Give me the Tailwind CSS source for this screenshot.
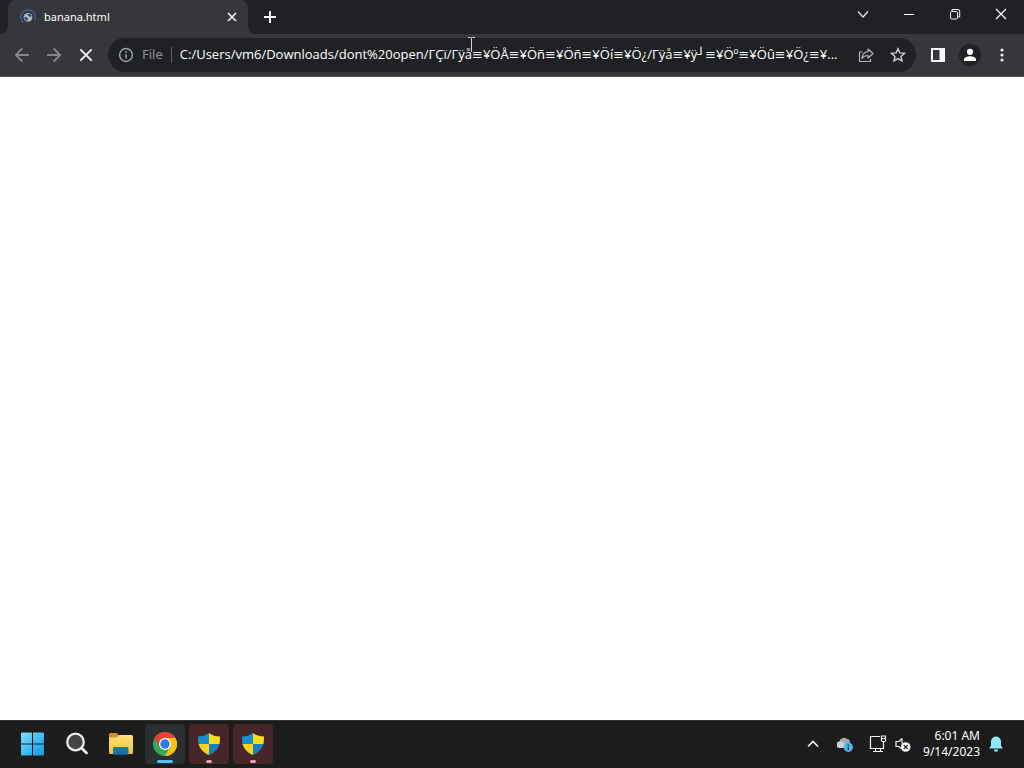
<!DOCTYPE html>
<html lang="en">
<head>
<meta charset="utf-8">
<title>banana.html</title>
<script src="https://cdn.jsdelivr.net/npm/@tailwindcss/browser@4"></script>
</head>
<body class="flex h-screen flex-col overflow-hidden bg-white font-['Noto_Sans','Open_Sans',sans-serif] text-white">
<header class="relative shrink-0">
  <div class="flex h-[34px] bg-[#202124]">
    <div class="relative ml-2 flex w-60 items-center rounded-t-lg bg-[#36373a] pr-2 pl-3">
      <svg class="absolute bottom-0 -left-2 size-2" viewBox="0 0 8 8" aria-hidden="true"><path d="M8 0v8H0a8 8 0 0 0 8-8z" fill="#36373a"/></svg>
      <svg class="absolute -right-2 bottom-0 size-2" viewBox="0 0 8 8" aria-hidden="true"><path d="M0 0v8h8a8 8 0 0 1-8-8z" fill="#36373a"/></svg>
      <svg class="size-4 shrink-0" viewBox="0 0 16 16" fill="none" aria-hidden="true"><path d="M3.500 13.700A7.200 7.200 0 1 1 14.600 11" stroke="#42598a" stroke-width="1.600"/><circle cx="8" cy="8.300" r="4.400" fill="#a6b4c4"/><path d="M4.400 8.200c1.600-.4 2.400.3 3.200 1.200.5.7-.1 1.600-.6 2.400-1.500-.5-2.500-1.800-2.600-3.600zM7.500 5.200c1.700-.6 3.200.2 4 1.700-.8 1.300-1.900 1-2.500.2-.5-.6-1.500-.8-1.500-1.900z" fill="#33415a"/></svg>
      <span class="ml-2 flex-1 text-[11px] leading-4">banana.html</span>
      <button class="flex size-4 items-center justify-center" aria-label="Close tab"><svg class="size-4" viewBox="0 0 16 16" stroke="#f1f3f4" stroke-width="1.700"><path d="M4 4l8 8M12 4l-8 8"/></svg></button>
    </div>
    <button class="ml-2 flex w-7 items-center justify-center" aria-label="New tab"><svg class="size-4" viewBox="0 0 16 16" stroke="#f8f9fa" stroke-width="2"><path d="M8 2v12M2 8h12"/></svg></button>
    <div class="ml-auto flex h-7">
      <button class="flex w-[46px] items-center justify-center" aria-label="Search tabs"><svg class="size-4" viewBox="0 0 16 16" fill="none" stroke="#e8eaed" stroke-width="1.200"><path d="M3 5.500l5 5.500 5-5.500"/></svg></button>
      <button class="flex w-[46px] items-center justify-center" aria-label="Minimize"><svg class="size-4" viewBox="0 0 16 16" stroke="#fff"><path d="M3 8.500h10"/></svg></button>
      <button class="flex w-[46px] items-center justify-center" aria-label="Restore"><svg class="size-4" viewBox="0 0 16 16" fill="none" stroke="#f1f3f4"><rect x="3.500" y="5.500" width="7" height="7.500" rx="1.200"/><path d="M5 5V3.500h6a1.700 1.700 0 0 1 1.700 1.700V11H11"/></svg></button>
      <button class="flex w-[46px] items-center justify-center" aria-label="Close"><svg class="size-4" viewBox="0 0 16 16" stroke="#fff" stroke-width="1.200"><path d="M3 3l10 10M13 3L3 13"/></svg></button>
    </div>
  </div>
  <div class="flex h-[43px] items-center border-b border-[#505154] bg-[#36373a] px-1.5">
    <button class="flex w-8 justify-center" aria-label="Back"><svg class="size-4" viewBox="0 0 16 16" fill="none" stroke="#85878a" stroke-width="1.800"><path d="M15 8H2M8.300 1.500L1.800 8l6.500 6.500"/></svg></button>
    <button class="flex w-8 justify-center" aria-label="Forward"><svg class="size-4" viewBox="0 0 16 16" fill="none" stroke="#85878a" stroke-width="1.800"><path d="M1 8h13M7.700 1.500L14.200 8l-6.500 6.500"/></svg></button>
    <button class="flex w-8 justify-center" aria-label="Stop loading"><svg class="size-4" viewBox="0 0 16 16" stroke="#f1f3f4" stroke-width="1.900"><path d="M2.300 2.300l11.400 11.400M13.700 2.300L2.300 13.700"/></svg></button>
    <div class="mx-1.5 flex h-[34px] min-w-0 flex-1 items-center rounded-full bg-[#202124] pr-0.5 pl-2.5 text-[13px]">
      <svg class="size-4 shrink-0" viewBox="0 0 16 16" fill="none" stroke="#9aa0a6" stroke-width="1.500" aria-hidden="true"><circle cx="8" cy="8" r="6.400"/><path d="M8 7.200v4.300M8 4.300v1.600"/></svg>
      <label for="url" class="ml-2 text-[#8e9195]">File</label>
      <span class="mx-2 h-4 w-px bg-[#626468]"></span>
      <input id="url" class="min-w-0 flex-1 bg-transparent font-['Open_Sans','Inter','DejaVu_Sans',sans-serif] text-white outline-none" value="C:/Users/vm6/Downloads/dont%20open/ΓÇï/Γÿå≡¥ÖÅ≡¥Öñ≡¥Öñ≡¥Öí≡¥Ö¿/Γÿå≡¥ÿ┘≡¥Öº≡¥Öû≡¥Ö¿≡¥...">
      <button class="flex w-8 shrink-0 justify-center" aria-label="Share this page"><svg class="size-4" viewBox="0 0 16 16" fill="none" stroke="#b4b6b9" stroke-width="1.200" stroke-linejoin="round"><path d="M4.500 5H1.500v9.500h11V12M10 2l5 4.500-5 4.500V8.500c-3 0-4.500.8-6 3 .3-3.700 2.300-6.500 6-7z"/></svg></button>
      <button class="flex w-8 shrink-0 justify-center" aria-label="Bookmark this tab"><svg class="size-4" viewBox="0 0 16 16" fill="none" stroke="#d0d2d5" stroke-width="1.400"><path d="M8 1.800l1.850 4.150 4.550.45-3.400 3.050 1 4.450L8 11.600l-4 2.300 1-4.450L1.600 6.400l4.550-.45z"/></svg></button>
    </div>
    <button class="flex w-8 justify-center" aria-label="Side panel"><svg class="size-4" viewBox="0 0 16 16"><path d="M1 1h14v14H1zM3 3v10h6.500V3z" fill="#f8f9fa" fill-rule="evenodd"/></svg></button>
    <button class="flex w-8 justify-center" aria-label="Profile"><svg class="size-[22px]" viewBox="0 0 22 22"><circle cx="11" cy="11" r="11" fill="#202124"/><circle cx="11" cy="7.800" r="3.100" fill="#fff"/><path d="M5 17v-1.500c0-2.200 3.500-3.300 6-3.300s6 1.100 6 3.300V17z" fill="#fff"/></svg></button>
    <button class="flex w-8 justify-center" aria-label="Menu"><svg class="size-4" viewBox="0 0 16 16" fill="#e8eaed"><circle cx="8" cy="3" r="1.600"/><circle cx="8" cy="8" r="1.600"/><circle cx="8" cy="13" r="1.600"/></svg></button>
  </div>
  <svg class="absolute top-[37px] left-[468px] h-4 w-[7px]" viewBox="0 0 7 16" fill="none" stroke="#d5d5d5" aria-hidden="true"><path d="M0 .5h2.500l1 .5 1-.5H7M3.500 1v14"/></svg>
</header>
<main class="flex-1 bg-white"></main>
<footer class="flex h-12 shrink-0 items-center border-t border-[#343434] bg-[#1c1c1c] pr-5 pb-0.5 pl-[13px]">
  <nav class="flex gap-1" aria-label="Taskbar">
    <button class="flex size-10 items-center justify-center" aria-label="Start"><svg class="size-6" viewBox="0 0 24 24"><defs><linearGradient id="win" x1="0" y1="0" x2="24" y2="24" gradientUnits="userSpaceOnUse"><stop stop-color="#7fe0fb"/><stop offset=".55" stop-color="#3bb9f0"/><stop offset="1" stop-color="#1695dc"/></linearGradient></defs><path d="M1 .5h10v11H0v-10a1 1 0 0 1 1-1zM12 .5h10a1 1 0 0 1 1 1v10H12zM0 12.500h11v11H1a1 1 0 0 1-1-1zM12 12.500h11v10a1 1 0 0 1-1 1H12z" fill="url(#win)"/></svg></button>
    <button class="flex size-10 items-center justify-center" aria-label="Search"><svg class="size-6" viewBox="0 0 24 24"><circle cx="10.500" cy="10" r="8.300" fill="#454545" stroke="#ededed" stroke-width="2.200"/><path d="M16.500 16l5 5" stroke="#ededed" stroke-width="2.800" stroke-linecap="round"/></svg></button>
    <button class="flex size-10 items-center justify-center" aria-label="File Explorer"><svg class="size-6" viewBox="0 0 24 24"><defs><linearGradient id="folder" x1="0" y1="0" x2="0" y2="1"><stop stop-color="#ffe079"/><stop offset="1" stop-color="#f6c33c"/></linearGradient></defs><path d="M0 7V2.500A1.500 1.500 0 0 1 1.500 1h6l3 2.500L8 7z" fill="#c9931f"/><path d="M0 5.500h7.500l3-2.500h12A1.500 1.500 0 0 1 24 4.500v16a1.500 1.500 0 0 1-1.500 1.500h-21A1.500 1.500 0 0 1 0 20.500z" fill="url(#folder)"/><path d="M4 22.500v-6a1.500 1.500 0 0 1 1.500-1.500h12.500a1.500 1.500 0 0 1 1.500 1.500v6z" fill="#1875b8"/><path d="M7 22.500v-2c0-.6.400-1 1-1h7.500c.6 0 1 .4 1 1v2z" fill="#1669a8"/></svg></button>
    <button class="relative flex size-10 items-center justify-center rounded-sm bg-[#2c2f2f]" aria-label="Google Chrome"><svg class="size-6" viewBox="0 0 24 24"><circle cx="12" cy="12" r="12" fill="#34a853"/><path d="M12 12L1.600 6A12 12 0 0 1 22.400 6z" fill="#ea4335"/><path d="M12 6h10.400A12 12 0 0 1 12 24l5.200-9z" fill="#fbc116"/><path d="M1.600 6l5.200 9L12 6z" fill="#ea4335"/><circle cx="12" cy="12" r="6" fill="#fff"/><circle cx="12" cy="12" r="4.700" fill="#3478e5"/></svg><span class="absolute bottom-px h-[3px] w-4 rounded-full bg-[#4cc2ff]"></span></button>
    <button class="relative flex size-10 items-center justify-center rounded-sm bg-[#472629]" aria-label="Security prompt 1"><svg class="size-6" viewBox="0 0 24 24"><path d="M12 1v11H1.500C1 9 1 6 1 4.500 5 4.500 9 3.500 12 1z" fill="#1690cf"/><path d="M12 1v11h10.500C23 9 23 6 23 4.500 19 4.500 15 3.500 12 1z" fill="#ffda1f"/><path d="M12 12H1.500C3 17 7 21 12 23z" fill="#fcd21c"/><path d="M12 12h10.500C21 17 17 21 12 23z" fill="#1682bd"/></svg><span class="absolute bottom-px h-[3px] w-1.5 rounded-full bg-[#ef9da4]"></span></button>
    <button class="relative flex size-10 items-center justify-center rounded-sm bg-[#472629]" aria-label="Security prompt 2"><svg class="size-6" viewBox="0 0 24 24"><path d="M12 1v11H1.500C1 9 1 6 1 4.500 5 4.500 9 3.500 12 1z" fill="#1690cf"/><path d="M12 1v11h10.500C23 9 23 6 23 4.500 19 4.500 15 3.500 12 1z" fill="#ffda1f"/><path d="M12 12H1.500C3 17 7 21 12 23z" fill="#fcd21c"/><path d="M12 12h10.500C21 17 17 21 12 23z" fill="#1682bd"/></svg><span class="absolute bottom-px h-[3px] w-1.5 rounded-full bg-[#ef9da4]"></span></button>
  </nav>
  <div class="ml-auto flex items-center">
    <button class="mr-4" aria-label="Show hidden icons"><svg class="size-4" viewBox="0 0 16 16" fill="none" stroke="#f1f1f1" stroke-width="1.600"><path d="M3 10.500l5-5 5 5"/></svg></button>
    <button class="mr-4" aria-label="OneDrive"><svg class="size-4" viewBox="0 0 16 16"><path d="M3 11a3 3 0 0 1-.5-5.500A4.500 4.500 0 0 1 10 3c2.500 0 3.500 2 3 5l-4 4z" fill="#a9a9a9"/><path d="M2.500 5.500C5 5 6.500 7 9 8l-2 4H3a3 3 0 0 1-.5-6.500z" fill="#d0d0d0"/><circle cx="11.300" cy="11.300" r="4.700" fill="#4cb9ee"/><path d="M11.300 10.500V14M11.300 8.400v1.300" stroke="#12364a" stroke-width="1.400"/></svg></button>
    <button class="mr-2" aria-label="Network"><svg class="size-[18px]" viewBox="0 0 18 18" fill="none" stroke="#f1f1f1" stroke-width="1.200"><path d="M11 1.500H1.500V13.500h13V7M12.500 1h4v4.500a1 1 0 0 1-1 1h-2a1 1 0 0 1-1-1zM12.500 3.500h4M6.500 13.500v3M11.500 13.500v3M4 16.500h10"/></svg></button>
    <button class="mr-3" aria-label="Volume muted"><svg class="size-4" viewBox="0 0 16 16"><path d="M7 2.500L4 5.500H1v5h3L6 12.500M7 2.500v5" fill="none" stroke="#f1f1f1" stroke-width="1.200"/><circle cx="10.700" cy="11" r="4.800" fill="#f1f1f1"/><path d="M8.800 9.100l3.800 3.800M12.600 9.100l-3.800 3.800" stroke="#1c1c1c" stroke-width="1.300"/></svg></button>
    <button class="mr-2 text-right text-[12px] leading-4">6:01 AM<br>9/14/2023</button>
    <button aria-label="Notifications"><svg class="size-4" viewBox="0 0 16 16" fill="#8fe8fa"><path d="M8 .5a5 5 0 0 1 5 5v4l1.800 3H1.200l1.800-3v-4a5 5 0 0 1 5-5zM5.800 13.500h4.400a2.200 2.200 0 0 1-4.400 0z"/></svg></button>
  </div>
</footer>
</body>
</html>
